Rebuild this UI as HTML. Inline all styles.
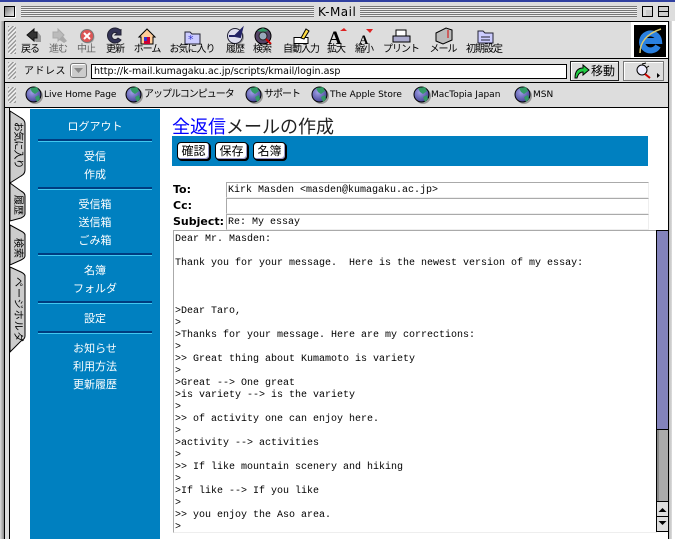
<!DOCTYPE html>
<html><head><meta charset="utf-8"><style>
html,body{margin:0;padding:0;background:#fff}
#p{position:relative;width:675px;height:539px;overflow:hidden;background:#fff;font-family:"Liberation Sans","WenQuanYi Zen Hei","Noto Sans CJK JP",sans-serif;font-size:11px;color:#000}
#p div,#p svg{position:absolute}
.l{font-size:10px;letter-spacing:-1px;line-height:12px;white-space:nowrap;transform:translateX(-50%);top:44px}
.g{width:8px;left:8px;background:repeating-linear-gradient(135deg,#999 0 1.4px,#eee 1.4px 3px)}
.f{font-family:"DejaVu Sans","WenQuanYi Zen Hei",sans-serif;font-size:9px;line-height:12px;top:89px;white-space:nowrap}
.s{left:30px;width:130px;text-align:center;color:#fff;font-size:11px;line-height:12px;white-space:nowrap}
.h{left:38px;width:114px;height:3px;background:linear-gradient(#003c80 0 2px,#40c8f0 2px)}
.btn{top:142px;height:16px;border:1px solid #000;border-radius:4px;background:#fff;box-shadow:inset -1px -1px 0 #99c,1px 1px 0 #000;font-size:12px;line-height:16px;text-align:center}
.lb{left:173px;font-family:"DejaVu Sans",sans-serif;font-weight:bold;font-size:11px;line-height:13px}
.in{left:226px;width:421px;height:14px;border:1px solid #eee;border-top-color:#aaa;border-left-color:#aaa;font-family:"Liberation Mono",monospace;font-size:10px;line-height:16px;white-space:pre;text-indent:1px;background:#fff}
pre{position:absolute;margin:0;left:175px;top:234px;font-family:"Liberation Mono",monospace;font-size:10px;line-height:12px;color:#000}
.tab{font-size:10px;line-height:12px;writing-mode:vertical-rl;text-orientation:sideways;white-space:nowrap;left:11px;width:12px;text-align:center}
</style></head><body><div id="p">
<div style="left:0;top:0;width:675px;height:539px;background:#ccc"></div>
<div style="left:0;top:0;width:675px;height:2px;background:#3040a0"></div>
<div style="left:0;top:2px;width:675px;height:19px;background:#ddd"></div>
<div style="left:4px;top:6px;width:9px;height:9px;border:1px solid #000;background:linear-gradient(135deg,#777,#eee);box-shadow:1px 1px 0 #fff"></div>
<div style="left:21px;top:6px;width:293px;height:11px;background:repeating-linear-gradient(#777 0 1px,#eee 1px 2px)"></div>
<div style="left:360px;top:6px;width:277px;height:11px;background:repeating-linear-gradient(#777 0 1px,#eee 1px 2px)"></div>
<div style="left:318px;top:5px;font-family:'DejaVu Sans',sans-serif;font-size:12px;line-height:14px;letter-spacing:.5px">K-Mail</div>
<div style="left:642px;top:6px;width:9px;height:9px;border:1px solid #000;background:#ccc;box-shadow:inset 3px 3px 0 #ddd"></div>
<div style="left:658px;top:6px;width:9px;height:9px;border:1px solid #000;background:linear-gradient(#ccc 0 4px,#000 4px 5px,#ccc 5px)"></div>

<div style="left:4px;top:21px;width:665px;height:518px;background:#000"></div>
<div style="left:5px;top:22px;width:663px;height:36px;background:#ddd"></div>
<div style="left:5px;top:59px;width:663px;height:23px;background:#ddd"></div>
<div style="left:5px;top:83px;width:663px;height:24px;background:#ddd"></div>
<div style="left:669px;top:21px;width:6px;height:518px;background:linear-gradient(90deg,#bbb,#ddd 3px,#fff 3px)"></div>
<div style="left:0;top:21px;width:4px;height:518px;background:linear-gradient(90deg,#ddd,#888)"></div>
<div class="g" style="top:26px;height:28px"></div>
<div class="g" style="top:62px;height:17px"></div>
<div class="g" style="top:87px;height:16px"></div>

<!-- toolbar icons -->
<svg style="left:0;top:24px" width="675" height="22" viewBox="0 24 675 22">
<path d="M31 37h6v-6l4 5v6h-5z" fill="#999"/>
<path d="M27 35l7-6v3h3v6h-3v3z" fill="#333" stroke="#111"/>
<path d="M58 39l6 4 3-2-5-6z" fill="#aaa"/><path d="M64 35l-6-6v3h-5v6h5v3z" fill="#bbb" stroke="#aaa"/>
<circle cx="88" cy="37" r="6.500" fill="#aaa"/><circle cx="87" cy="36" r="6.500" fill="#dd5555" stroke="#777"/><path d="M84 33l6 6m0-6l-6 6" stroke="#fff" stroke-width="2"/>
<path d="M121 31a7.500 7.500 0 1 0 0 9l-3-2a3.500 3.500 0 1 1-1-5l-2 2h6v-6z" fill="#335" stroke="#223"/>
<path d="M139 37l8-8 8 8h-2v7h-12v-7z" fill="#fc9" stroke="#000"/><path d="M144 37h6v7h-6z" fill="#c03"/><path d="M144 37h3v4h-3z" fill="#33c"/>
<path d="M185 32h5l2 2h8v10h-15z" fill="#ccf" stroke="#223"/><text x="188" y="43" font-size="11" fill="#33c" font-family="DejaVu Sans">*</text>
<circle cx="237" cy="37" r="7" fill="#999"/><circle cx="235" cy="36" r="7.500" fill="#dde" stroke="#223"/><path d="M235 36l7-7-2 8zM229 36h6" stroke="#226" stroke-width="2" fill="#226"/>
<circle cx="263" cy="36" r="8" fill="#546" stroke="#000"/><path d="M257 31l6-3 5 3-5 1z" fill="#396"/><circle cx="263" cy="36" r="4" fill="#9ab" stroke="#222"/><path d="M266 39l5 5" stroke="#c00" stroke-width="2"/>
<path d="M294 37.500h14v6h-14z" fill="#fff" stroke="#000"/><path d="M301 38l5-9 3 2-5 8z" fill="#fd4" stroke="#000"/>
<text x="328" y="44" font-size="19" font-weight="bold" font-family="Liberation Serif">A</text><path d="M340 31l4-3 3 3z" fill="#d22"/>
<text x="359" y="44" font-size="13" font-weight="bold" font-family="Liberation Serif">A</text><path d="M366 29h7l-3 4z" fill="#d22"/>
<path d="M396 30h10v6h-10z" fill="#fff" stroke="#000"/><path d="M393 36h17v6h-17z" fill="#aac" stroke="#000"/>
<path d="M436 33l10-5 6 2v10l-9 4-7-3z" fill="#bbb" stroke="#000"/><path d="M448 30v8" stroke="#d00"/>
<path d="M478 31h5l2 2h8v10h-15z" fill="#ccf" stroke="#223"/><path d="M481 37h9m-9 3h9" stroke="#223"/>
</svg>
<div class="l" style="left:30px">戻る</div>
<div class="l" style="left:58px;color:#666">進む</div>
<div class="l" style="left:86px;color:#666">中止</div>
<div class="l" style="left:115px">更新</div>
<div class="l" style="left:147px">ホーム</div>
<div class="l" style="left:192px">お気に入り</div>
<div class="l" style="left:235px">履歴</div>
<div class="l" style="left:262px">検索</div>
<div class="l" style="left:301px">自動入力</div>
<div class="l" style="left:336px">拡大</div>
<div class="l" style="left:364px">縮小</div>
<div class="l" style="left:401px">プリント</div>
<div class="l" style="left:443px">メール</div>
<div class="l" style="left:484px">初期設定</div>

<div style="left:631px;top:22px;width:37px;height:36px;background:#fff"></div>
<div style="left:634px;top:25px;width:32px;height:32px;background:#000"></div>
<svg style="left:634px;top:25px" width="32" height="32" viewBox="0 0 32 32">
<path d="M24 21a8.500 8.500 0 1 1 1-5H11" fill="none" stroke="#2a80e0" stroke-width="6"/>
<path d="M6 28C6 18 12 9 27 4" stroke="#d8c870" stroke-width="1.500" fill="none"/>
</svg>

<!-- address -->
<div style="left:24px;top:66px;font-size:10px;letter-spacing:.5px;line-height:12px;white-space:nowrap">アドレス :</div>
<div style="left:70px;top:63px;width:15px;height:13px;border:1px solid #777;border-radius:3px;background:#ccc;box-shadow:inset 1px 1px 0 #fff"></div>
<svg style="left:70px;top:63px" width="17" height="15"><path d="M4 5h9l-4.500 5z" fill="#888"/></svg>
<div style="left:91px;top:64px;width:474px;height:13px;border:1px solid #000;background:#fff;font-family:'DejaVu Sans',sans-serif;font-size:9.500px;line-height:13px;text-indent:2px;white-space:nowrap">http://k-mail.kumagaku.ac.jp/scripts/kmail/login.asp</div>
<div style="left:570px;top:61px;width:47px;height:18px;border:1px solid #222;background:#ddd;box-shadow:inset 1px 1px 0 #fff"></div>
<svg style="left:572px;top:62px" width="20" height="18"><path d="M3 16c0-7 3-10 8-10V3l6 5-6 5v-3c-3 0-5 2-6 6z" fill="#2c4" stroke="#000"/></svg>
<div style="left:591px;top:64px;font-size:12px;line-height:14px">移動</div>
<div style="left:623px;top:61px;width:39px;height:18px;border:1px solid #777;background:#ddd;box-shadow:inset 1px 1px 0 #fff"></div>
<svg style="left:634px;top:62px" width="30" height="18"><circle cx="8" cy="8" r="5" fill="#eef" stroke="#000"/><path d="M11 12l5 4" stroke="#c00" stroke-width="2"/><path d="M8 2l4-1M12 6l3-2" stroke="#000"/><path d="M23 11l3 2.500-3 2.500z"/></svg>

<!-- favorites -->
<svg style="left:0;top:85px" width="675" height="20">
<defs><radialGradient id="gl" cx=".4" cy=".35" r=".7"><stop offset="0" stop-color="#a0a0e8"/><stop offset="1" stop-color="#404090"/></radialGradient>
<g id="o"><circle cx="10" cy="11" r="8" fill="#999"/><circle cx="8.500" cy="9.500" r="7.500" fill="url(#gl)" stroke="#000"/><path d="M5 3l7-1 2 4-4 3-3-2zM10 12l4-2 1 4-3 3z" fill="#396"/></g></defs>
<use href="#o" x="25"/><use href="#o" x="125"/><use href="#o" x="245"/><use href="#o" x="311"/><use href="#o" x="413"/><use href="#o" x="514"/>
</svg>
<div class="f" style="left:44px">Live Home Page</div>
<div class="f" style="left:144px;font-size:10px;letter-spacing:-1px">アップルコンピュータ</div>
<div class="f" style="left:264px;font-size:10px;letter-spacing:-1px">サポート</div>
<div class="f" style="left:330px">The Apple Store</div>
<div class="f" style="left:431px">MacTopia Japan</div>
<div class="f" style="left:533px">MSN</div>

<!-- content -->
<div style="left:5px;top:108px;width:663px;height:431px;background:#fff"></div>
<div style="left:5px;top:108px;width:4px;height:431px;background:#ddd"></div>
<div style="left:9px;top:108px;width:1px;height:431px;background:#000"></div>
<svg style="left:9px;top:108px" width="18" height="250">
<path d="M1 3l11 7q4 2 4 6v46q0 4-4 6L1 75z" fill="#ccc" stroke="#000"/>
<path d="M1 75l11 8q4 2 4 5v18q0 2-4 4L1 113z" fill="#ccc" stroke="#000"/>
<path d="M1 117l11 6q4 2 4 4v21q0 2-4 4L1 157z" fill="#ccc" stroke="#000"/>
<path d="M1 159l11 5q4 2 4 4v60q0 3-4 5L1 244z" fill="#ccc" stroke="#000"/>
</svg>
<div class="tab" style="top:122px;letter-spacing:-.8px">お気に入り</div>
<div class="tab" style="top:195px">履歴</div>
<div class="tab" style="top:238px">検索</div>
<div class="tab" style="top:277px;letter-spacing:1px">ページホルダ</div>

<!-- sidebar -->
<div style="left:30px;top:109px;width:130px;height:430px;background:#0080c0"></div>
<div class="s" style="top:121px">ログアウト</div>
<div class="h" style="top:139px"></div>
<div class="s" style="top:151px">受信</div>
<div class="s" style="top:169px">作成</div>
<div class="h" style="top:187px"></div>
<div class="s" style="top:199px">受信箱</div>
<div class="s" style="top:217px">送信箱</div>
<div class="s" style="top:235px">ごみ箱</div>
<div class="h" style="top:253px"></div>
<div class="s" style="top:265px">名簿</div>
<div class="s" style="top:283px">フォルダ</div>
<div class="h" style="top:301px"></div>
<div class="s" style="top:313px">設定</div>
<div class="h" style="top:331px"></div>
<div class="s" style="top:343px">お知らせ</div>
<div class="s" style="top:361px">利用方法</div>
<div class="s" style="top:379px">更新履歴</div>

<!-- main -->
<div style="left:172px;top:117px;font-size:18px;line-height:20px;white-space:nowrap;color:#222"><span style="color:#00f">全返信</span>メールの作成</div>
<div style="left:172px;top:136px;width:476px;height:30px;background:#0080c0"></div>
<div class="btn" style="left:177px;width:31px">確認</div>
<div class="btn" style="left:215px;width:31px">保存</div>
<div class="btn" style="left:253px;width:31px">名簿</div>
<div class="lb" style="top:183px">To:</div>
<div class="lb" style="top:199px">Cc:</div>
<div class="lb" style="top:215px">Subject:</div>
<div class="in" style="top:182px">Kirk Masden &lt;masden@kumagaku.ac.jp&gt;</div>
<div class="in" style="top:198px"></div>
<div class="in" style="top:214px">Re: My essay</div>
<div style="left:173px;top:230px;width:483px;height:301px;border-top:1px solid #aaa;border-left:1px solid #aaa;border-bottom:1px solid #eee"></div>
<pre>Dear Mr. Masden:

Thank you for your message.  Here is the newest version of my essay:



&gt;Dear Taro,
&gt;
&gt;Thanks for your message. Here are my corrections:
&gt;
&gt;&gt; Great thing about Kumamoto is variety
&gt;
&gt;Great --&gt; One great
&gt;is variety --&gt; is the variety
&gt;
&gt;&gt; of activity one can enjoy here.
&gt;
&gt;activity --&gt; activities
&gt;
&gt;&gt; If like mountain scenery and hiking
&gt;
&gt;If like --&gt; If you like
&gt;
&gt;&gt; you enjoy the Aso area.
&gt;</pre>

<!-- scrollbar -->
<div style="left:656px;top:230px;width:12px;height:302px;background:#000"></div>
<div style="left:657px;top:231px;width:11px;height:198px;background:#8383bb"></div>
<div style="left:657px;top:430px;width:11px;height:71px;background:#aaa;box-shadow:inset 2px 0 0 #888"></div>
<div style="left:657px;top:502px;width:11px;height:14px;background:#ddd"></div>
<div style="left:657px;top:517px;width:11px;height:14px;background:#ddd"></div>
<svg style="left:657px;top:502px" width="11" height="29"><path d="M1.500 10l4-4 4 4z"/><path d="M1.500 19l4 4 4-4z"/></svg>
</div></body></html>
